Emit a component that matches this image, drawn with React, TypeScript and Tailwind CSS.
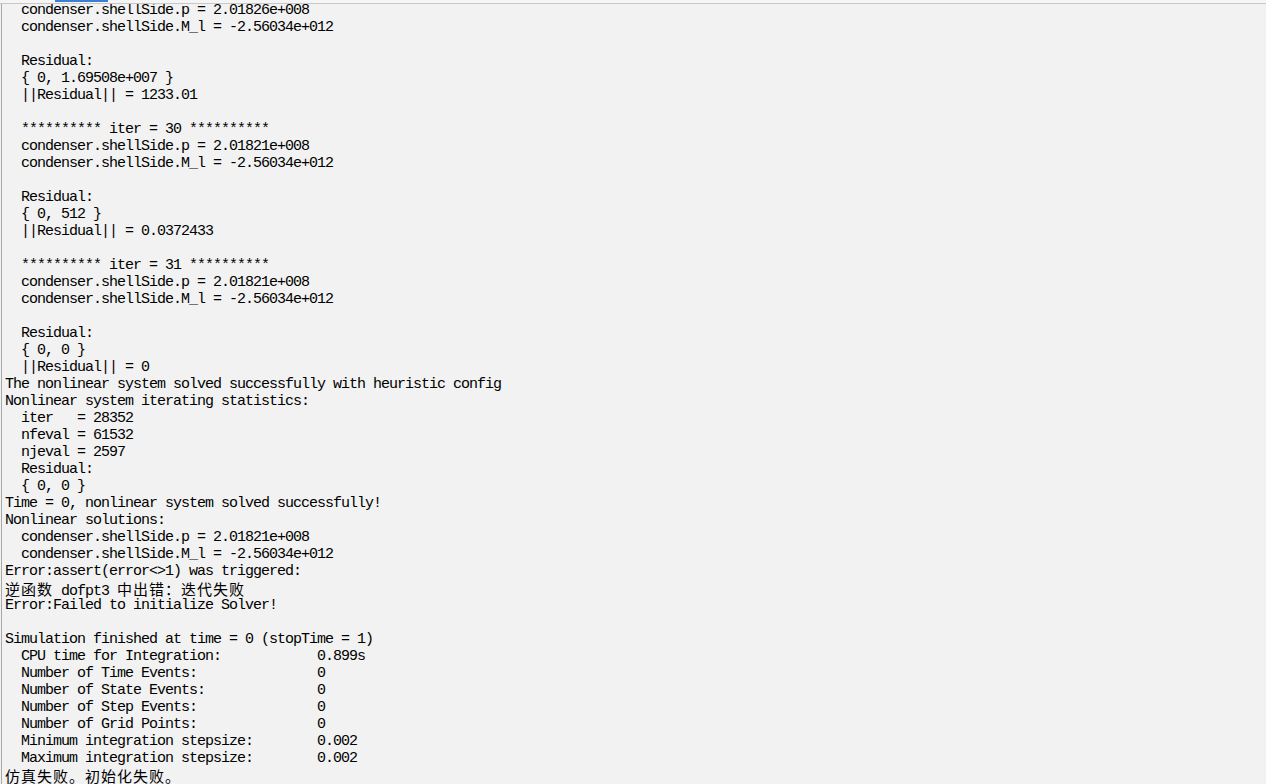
import React from "react";

// ─── Console log ──────────────────────────────────────────────────────────────

const LOG: string[] = [
  "  condenser.shellSide.p = 2.01826e+008",
  "  condenser.shellSide.M_l = -2.56034e+012",
  "",
  "  Residual:",
  "  { 0, 1.69508e+007 }",
  "  ||Residual|| = 1233.01",
  "",
  "  ********** iter = 30 **********",
  "  condenser.shellSide.p = 2.01821e+008",
  "  condenser.shellSide.M_l = -2.56034e+012",
  "",
  "  Residual:",
  "  { 0, 512 }",
  "  ||Residual|| = 0.0372433",
  "",
  "  ********** iter = 31 **********",
  "  condenser.shellSide.p = 2.01821e+008",
  "  condenser.shellSide.M_l = -2.56034e+012",
  "",
  "  Residual:",
  "  { 0, 0 }",
  "  ||Residual|| = 0",
  "The nonlinear system solved successfully with heuristic config",
  "Nonlinear system iterating statistics:",
  "  iter   = 28352",
  "  nfeval = 61532",
  "  njeval = 2597",
  "  Residual:",
  "  { 0, 0 }",
  "Time = 0, nonlinear system solved successfully!",
  "Nonlinear solutions:",
  "  condenser.shellSide.p = 2.01821e+008",
  "  condenser.shellSide.M_l = -2.56034e+012",
  "Error:assert(error<>1) was triggered:",
  "逆函数 dofpt3 中出错：迭代失败",
  "Error:Failed to initialize Solver!",
  "",
  "Simulation finished at time = 0 (stopTime = 1)",
  "  CPU time for Integration:            0.899s",
  "  Number of Time Events:               0",
  "  Number of State Events:              0",
  "  Number of Step Events:               0",
  "  Number of Grid Points:               0",
  "  Minimum integration stepsize:        0.002",
  "  Maximum integration stepsize:        0.002",
  "仿真失败。初始化失败。",
];

const CJK = /[\u3000-\u303f\u4e00-\u9fff\uff00-\uffef]+/g;

function LogLine({ text }: { text: string }) {
  if (!text) return <div className="h-[17px]" />;
  const parts: React.ReactNode[] = [];
  let last = 0;
  for (const m of text.matchAll(CJK)) {
    const i = m.index ?? 0;
    if (i > last) parts.push(text.slice(last, i));
    parts.push(
      <span
        key={i}
        className="text-[15px] leading-[17px] tracking-[1px]"
        style={{ fontFamily: '"Noto Sans CJK SC", sans-serif' }}
      >
        {m[0]}
      </span>
    );
    last = i + m[0].length;
  }
  if (last < text.length) parts.push(text.slice(last));
  return <div className="h-[17px] whitespace-pre">{parts}</div>;
}

export default function App() {
  return (
    <div className="flex h-[784px] w-[1266px] flex-col overflow-hidden bg-[#f2f2f2]">
      {/* Tab strip */}
      <div className="relative h-[4px] shrink-0 border-b border-[#c8c8c8] bg-[#f5f5f5]">
        <div className="absolute left-[55px] top-0 h-[2px] w-[53px] bg-[#3a7fd5]" />
      </div>

      {/* Output */}
      <div className="flex min-h-0 flex-1 pl-[1px]">
        <div className="min-h-0 flex-1 overflow-hidden border-l border-[#a8a8a8] pl-[3px]">
          <div
            className="-mt-[2px] text-[15px] leading-[17px] tracking-[-1px] text-black"
            style={{ fontFamily: '"Liberation Mono", "Noto Sans CJK SC", monospace' }}
          >
            {LOG.map((line, i) => (
              <LogLine key={i} text={line} />
            ))}
          </div>
        </div>
      </div>
    </div>
  );
}
